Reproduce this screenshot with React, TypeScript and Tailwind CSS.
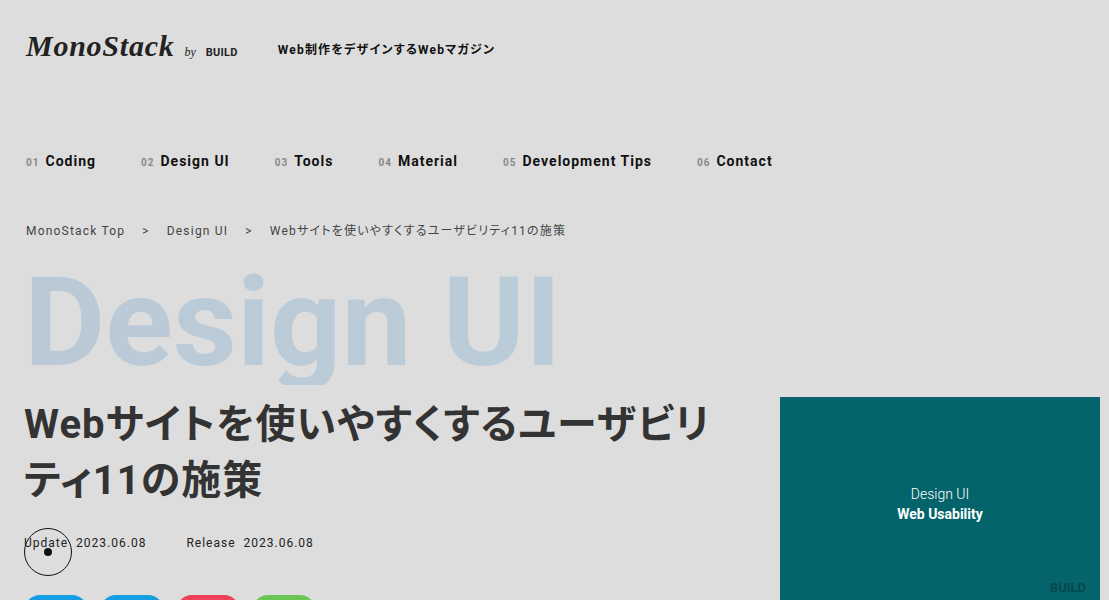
const navItems = ['Coding', 'Design UI', 'Tools', 'Material', 'Development Tips', 'Contact'];

const shareLinks = [
  { label: 'Twitter', color: 'bg-[#159fe2]' },
  { label: 'Facebook', color: 'bg-[#159fe2]' },
  { label: 'Pocket', color: 'bg-[#ee4158]' },
  { label: 'Feedly', color: 'bg-[#6cc655]' },
];

function Header() {
  return (
    <header className="px-[26px] pt-7">
      <div className="flex items-center gap-10">
        <a href="#" className="flex items-baseline gap-2.5 text-[#222]">
          <span className="font-['Liberation_Serif',serif] text-[30px] leading-9 font-bold italic tracking-wide">MonoStack</span>
          <span className="font-['Liberation_Serif',serif] text-xs italic">by</span>
          <span className="text-[11px] font-bold tracking-wide">BUILD</span>
        </a>
        <p className="pt-2 text-xs font-bold tracking-widest">Web制作をデザインするWebマガジン</p>
      </div>
      <nav className="mt-[87px]">
        <ul className="flex flex-wrap gap-x-[45px]">
          {navItems.map((item, i) => (
            <li key={item}>
              <a href="#" className="flex items-baseline gap-1.5 text-sm font-bold tracking-[1px]">
                <span className="text-[10px] text-[#888]">0{i + 1}</span>
                {item}
              </a>
            </li>
          ))}
        </ul>
      </nav>
    </header>
  );
}

function Breadcrumb() {
  return (
    <nav aria-label="Breadcrumb" className="mt-[52px] px-[26px] text-xs tracking-widest text-[#444]">
      <ol className="flex items-center gap-[17px]">
        <li><a href="#">MonoStack Top</a></li>
        <li aria-hidden="true">&gt;</li>
        <li><a href="#">Design UI</a></li>
        <li aria-hidden="true">&gt;</li>
        <li>Webサイトを使いやすくするユーザビリティ11の施策</li>
      </ol>
    </nav>
  );
}

function Cursor() {
  return (
    <span aria-hidden="true" className="pointer-events-none absolute -top-[7px] left-0 flex size-12 items-center justify-center rounded-full border border-[#111]">
      <span className="size-2 rounded-full bg-[#111]" />
    </span>
  );
}

export default function App() {
  return (
    <div className="h-screen overflow-hidden bg-[#ddd] font-[Roboto,'Noto_Sans_CJK_JP',sans-serif] text-[#111] [font-feature-settings:'palt']">
      <Header />
      <Breadcrumb />
      <p className="mt-[23px] h-[123px] overflow-hidden bg-linear-to-r from-[#bac9d5] to-[#bccfdd] bg-clip-text px-6 text-[125px] leading-[122px] font-bold text-transparent">
        Design UI
      </p>
      <main className="flex items-start gap-10 pt-3 pr-[9px] pl-6">
        <article className="min-w-0 flex-1">
          <h1 className="text-[40px] leading-14 font-bold tracking-wide text-[#333]">
            Webサイトを使いやすくするユーザビリティ11の施策
          </h1>
          <div className="relative mt-[26px] flex gap-10 text-xs tracking-[1px] text-[#222]">
            <dl className="flex gap-2"><dt>Update</dt><dd>2023.06.08</dd></dl>
            <dl className="flex gap-2"><dt>Release</dt><dd>2023.06.08</dd></dl>
            <Cursor />
          </div>
          <div className="mt-11 flex gap-3">
            {shareLinks.map((link) => (
              <a key={link.label} href="#" aria-label={link.label} className={`h-8 w-16 rounded-2xl ${link.color}`} />
            ))}
          </div>
        </article>
        <aside className="w-80 shrink-0">
          <a href="#" className="flex h-[213px] flex-col bg-[#05636b] text-white">
            <span className="mt-[87px] text-center text-sm leading-5 font-light">Design UI</span>
            <span className="text-center text-sm leading-5 font-bold">Web Usability</span>
            <span className="mt-auto pr-[14px] pb-[14px] text-right text-[13px] leading-4 font-bold text-[#06484f]">BUILD</span>
          </a>
        </aside>
      </main>
    </div>
  );
}
